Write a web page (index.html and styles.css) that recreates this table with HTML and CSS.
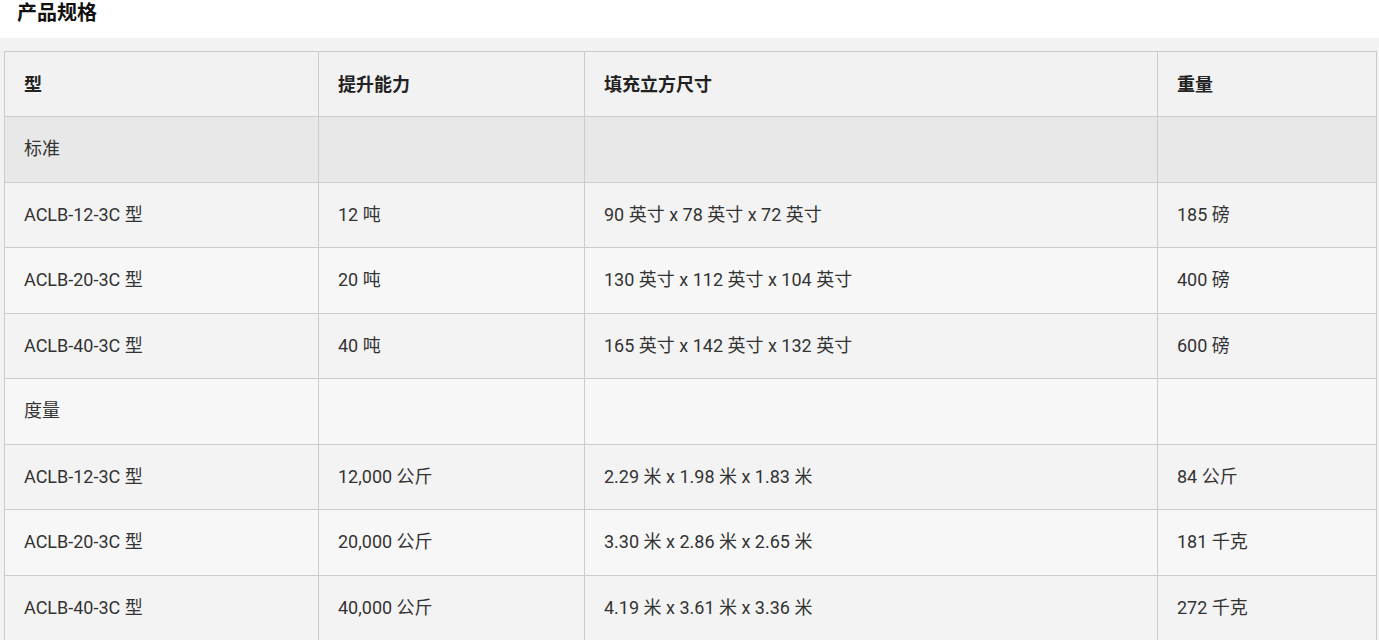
FILE: index.html
```html
<!DOCTYPE html>
<html lang="zh">
<head>
<meta charset="utf-8">
<link rel="stylesheet" href="styles.css">
</head>
<body>
<h2 class="title">产品规格</h2>
<div class="wrap">
<table class="spec">
<colgroup>
<col class="c1"><col class="c2"><col class="c3"><col class="c4">
</colgroup>
<thead>
<tr class="head"><th>型</th><th>提升能力</th><th>填充立方尺寸</th><th>重量</th></tr>
</thead>
<tbody>
<tr class="group"><td>标准</td><td></td><td></td><td></td></tr>
<tr class="dark"><td>ACLB-12-3C 型</td><td>12 吨</td><td>90 英寸 x 78 英寸 x 72 英寸</td><td>185 磅</td></tr>
<tr class="light"><td>ACLB-20-3C 型</td><td>20 吨</td><td>130 英寸 x 112 英寸 x 104 英寸</td><td>400 磅</td></tr>
<tr class="dark"><td>ACLB-40-3C 型</td><td>40 吨</td><td>165 英寸 x 142 英寸 x 132 英寸</td><td>600 磅</td></tr>
<tr class="light"><td>度量</td><td></td><td></td><td></td></tr>
<tr class="dark"><td>ACLB-12-3C 型</td><td>12,000 公斤</td><td>2.29 米 x 1.98 米 x 1.83 米</td><td>84 公斤</td></tr>
<tr class="light"><td>ACLB-20-3C 型</td><td>20,000 公斤</td><td>3.30 米 x 2.86 米 x 2.65 米</td><td>181 千克</td></tr>
<tr class="dark"><td>ACLB-40-3C 型</td><td>40,000 公斤</td><td>4.19 米 x 3.61 米 x 3.36 米</td><td>272 千克</td></tr>
</tbody>
</table>
</div>
</body>
</html>
```
FILE: styles.css
```css
html, body {
  margin: 0;
  padding: 0;
  background: #fff;
  font-family: Roboto, "Noto Sans CJK SC", sans-serif;
  color: #333;
}
.title {
  margin: 0;
  height: 38px;
  box-sizing: border-box;
  padding: 0 0 0 17px;
  font-size: 20px;
  line-height: 24px;
  font-weight: 700;
  color: #111;
  font-family: "Noto Sans CJK SC", sans-serif;
}
.wrap {
  background: #f2f2f2;
  padding: 13px 2px 0 4px;
}
.spec {
  width: 100%;
  table-layout: fixed;
  border-collapse: collapse;
  font-size: 18px;
  line-height: 24px;
}
.c1 { width: 314px; }
.c2 { width: 266px; }
.c3 { width: 573px; }
.c4 { width: auto; }
.spec th, .spec td {
  border: 1px solid #cccccc;
  padding: 0 0 0 19px;
  height: 64.5px;
  text-align: left;
  vertical-align: middle;
}
.spec th {
  font-weight: 700;
  font-family: "Noto Sans CJK SC", sans-serif;
  color: #222;
  height: 62px;
  padding-bottom: 2px;
}
.head { background: #f2f2f2; }
.group { background: #e8e8e8; }
.dark { background: #f3f3f3; }
.light { background: #f7f7f7; }
```
